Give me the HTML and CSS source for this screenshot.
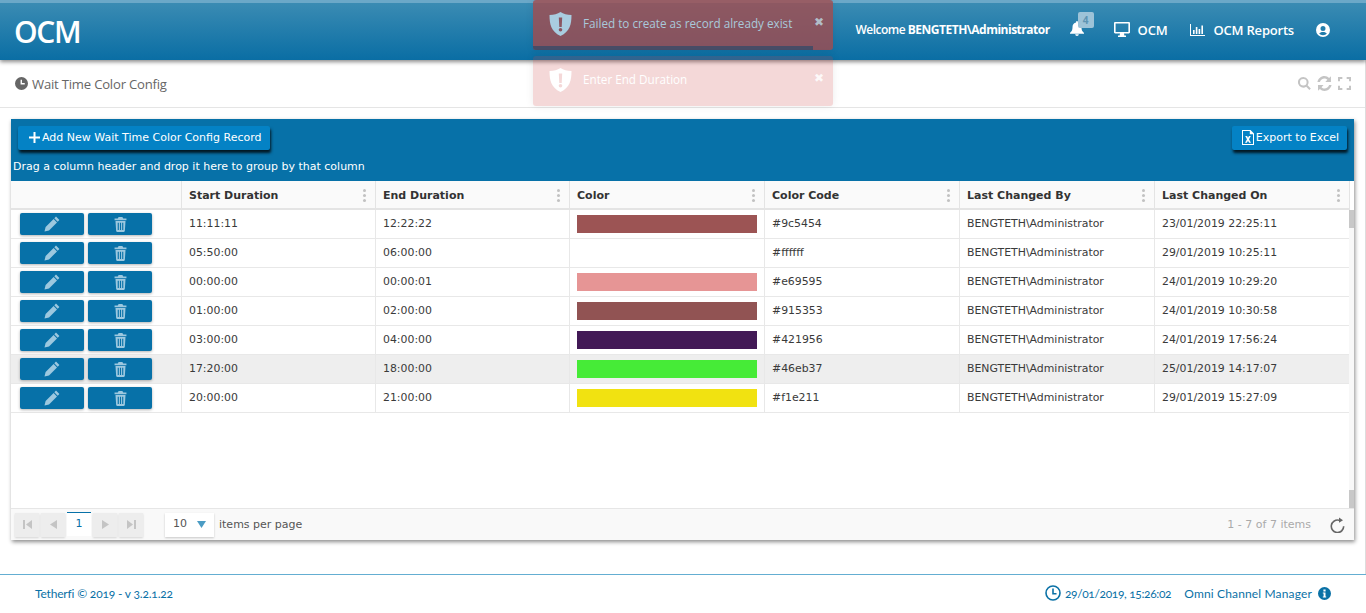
FILE: index.html
```html
<!DOCTYPE html>
<html lang="en">
<head>
    <meta charset="UTF-8">
    <title>Wait Time Color Config</title>
    <link rel="stylesheet" href="styles.css">
</head>
<body>
    <svg class="defs" width="0" height="0">
        <symbol id="i-pencil" viewBox="0 0 16 16"><path d="M12 .6l3.400 3.400-1.700 1.700-3.400-3.400zM9.600 3l3.400 3.400-8 8-4.500 1.100 1.100-4.500z"/></symbol>
        <symbol id="i-trash" viewBox="0 0 14 16"><path d="M5 0h4l1 1.600h3.400v1.800H.6V1.600H4zM1.600 4.200h10.800l-.7 10.600c0 .7-.5 1.200-1.200 1.200H3.500c-.7 0-1.200-.5-1.200-1.200zM4 6v8h1.200V6zm2.400 0v8h1.200V6zM8.800 6v8H10V6z" fill-rule="evenodd"/></symbol>
    </svg>

    <header class="topbar">
        <div class="logo">OCM</div>
        <nav class="topnav">
            <span class="welcome">Welcome <b>BENGTETH\Administrator</b></span>
            <span class="bell">
                <svg width="14" height="15" viewBox="0 0 15 16"><path d="M7.500 0c.6 0 1 .4 1 1v.6c2.300.4 3.800 2.300 3.800 4.600 0 4 1 5 2.700 6.600v.7H0v-.7c1.700-1.600 2.700-2.600 2.700-6.600 0-2.300 1.500-4.200 3.800-4.600V1c0-.6.4-1 1-1zM5.600 14.200h3.800c0 1-.8 1.800-1.900 1.800s-1.900-.8-1.900-1.800z"/></svg>
                <span class="bell-count">4</span>
            </span>
            <span class="navlink">
                <svg width="16" height="15" viewBox="0 0 16 15"><path d="M1.200 0h13.600c.7 0 1.200.5 1.200 1.200v9.100c0 .7-.5 1.200-1.200 1.200H10l.4 1.900h1.600V15H4v-1.600h1.600l.4-1.900H1.200C.5 11.500 0 11 0 10.300V1.200C0 .5.500 0 1.200 0zm.4 1.600v8.300h12.800V1.600z" fill-rule="evenodd"/></svg>
                OCM
            </span>
            <span class="navlink">
                <svg width="15" height="12" viewBox="0 0 15 12"><path d="M0 0h1v11h14v1H0zM3 6h1.600v4H3zM5.800 3h1.600v7H5.800zM8.600 5h1.600v5H8.600zM11.400 1.500H13V10h-1.600z"/></svg>
                OCM Reports
            </span>
            <svg class="user" width="14" height="14" viewBox="0 0 14 14"><path d="M7 0a7 7 0 1 1 0 14A7 7 0 0 1 7 0zm0 3a2.500 2.500 0 1 0 0 5 2.500 2.500 0 0 0 0-5zm0 6c-1.800 0-3.200.6-3.800 1.500C4.100 11.500 5.500 12.200 7 12.200s2.900-.7 3.800-1.700C10.200 9.600 8.800 9 7 9z" fill-rule="evenodd"/></svg>
        </nav>
    </header>

    <!-- Toasts sit over the header -->
    <div class="toast toast-dark">
        <svg class="shield" width="23" height="24" viewBox="0 0 23 24"><path d="M11.500 0c3 2 6.500 3 11 3 0 9-1.500 16.500-11 21C2 19.500.5 12 .5 3c4.500 0 8-1 11-3zM9.800 5.500l.5 9.500h2.400l.5-9.500zM11.500 16a1.800 1.800 0 1 0 0 3.600 1.800 1.800 0 0 0 0-3.600z" fill-rule="evenodd"/></svg>
        <span class="toast-text">Failed to create as record already exist</span>
        <span class="toast-close">&#10006;</span>
        <div class="toast-progress"></div>
    </div>
    <div class="toast toast-light">
        <svg class="shield" width="23" height="24" viewBox="0 0 23 24"><path d="M11.500 0c3 2 6.500 3 11 3 0 9-1.500 16.500-11 21C2 19.500.5 12 .5 3c4.500 0 8-1 11-3zM9.800 5.500l.5 9.500h2.400l.5-9.500zM11.500 16a1.800 1.800 0 1 0 0 3.600 1.800 1.800 0 0 0 0-3.600z" fill-rule="evenodd"/></svg>
        <span class="toast-text">Enter End Duration</span>
        <span class="toast-close">&#10006;</span>
    </div>

    <main class="content">
        <div class="titlebar">
            <h1>
                <svg width="13" height="13" viewBox="0 0 14 14"><path d="M7 0a7 7 0 1 1 0 14A7 7 0 0 1 7 0zM6 3v5h4.500V6.500H7.500V3z" fill-rule="evenodd"/></svg>
                Wait Time Color Config
            </h1>
            <div class="tools">
                <svg width="13" height="13" viewBox="0 0 13 13"><path d="M5.300 0a5.300 5.300 0 0 1 4.300 8.300l3.200 3.200-1.400 1.400-3.200-3.200A5.300 5.300 0 1 1 5.300 0zm0 2a3.300 3.300 0 1 0 0 6.600 3.300 3.300 0 0 0 0-6.600z" fill-rule="evenodd"/></svg>
                <svg width="15" height="15" viewBox="0 0 14 14"><path d="M7 0c1.700 0 3.200.7 4.300 1.800L13 .2V5.500H7.800l1.900-1.900C9 2.900 8 2.300 7 2.300 5 2.300 3.400 3.500 2.700 5.500H.4C1.100 2.300 3.700 0 7 0zM.9 8.500h5.200l-1.900 1.900c.7.700 1.700 1.300 2.800 1.300 2 0 3.600-1.200 4.300-3.200h2.300C12.900 11.700 10.300 14 7 14c-1.700 0-3.200-.7-4.300-1.800L1 13.800z"/></svg>
                <svg width="13" height="13" viewBox="0 0 12 12"><path d="M0 0h4v1.800H1.800V4H0zM8 0h4v4h-1.800V1.800H8zM0 8h1.800v2.200H4V12H0zM10.200 8H12v4H8v-1.800h2.200z"/></svg>
            </div>
        </div>

        <section class="grid">
            <div class="grid-toolbar">
                <div class="toolbar-row">
                    <button class="btn-primary">
                        <svg width="11" height="11" viewBox="0 0 11 11"><path d="M4.500 0h2v4.500H11v2H6.500V11h-2V6.500H0v-2h4.500z"/></svg>
                        Add New Wait Time Color Config Record
                    </button>
                    <button class="btn-primary btn-export">
                        <svg width="14" height="15" viewBox="0 0 14 15"><path d="M1 0h8.500L13 3.500V15H1zm1 1v13h10V4.200H8.800V1zm2.200 5h1.900l.9 1.800L8 6h1.800L8 9.300l2 3.400H8.100L7 10.700l-1.100 2H4l2-3.400z" fill-rule="evenodd"/></svg>
                        Export to Excel
                    </button>
                </div>
                <div class="group-hint">Drag a column header and drop it here to group by that column</div>
            </div>

            <div class="grid-body">
                <table class="data">
                    <colgroup>
                        <col class="col-actions"><col class="col-time"><col class="col-time">
                        <col class="col-wide"><col class="col-wide"><col class="col-wide"><col>
                    </colgroup>
                    <thead>
                        <tr>
                            <th></th>
                            <th>Start Duration<span class="kebab"></span></th>
                            <th>End Duration<span class="kebab"></span></th>
                            <th>Color<span class="kebab"></span></th>
                            <th>Color Code<span class="kebab"></span></th>
                            <th>Last Changed By<span class="kebab"></span></th>
                            <th>Last Changed On<span class="kebab"></span></th>
                        </tr>
                    </thead>
                    <tbody>
                        <tr>
                            <td class="actions"><button class="btn-row"><svg width="16" height="16"><use href="#i-pencil"/></svg></button><button class="btn-row"><svg width="13" height="15"><use href="#i-trash"/></svg></button></td>
                            <td>11:11:11</td><td>12:22:22</td><td class="color-cell"><div class="swatch c1"></div></td><td>#9c5454</td><td>BENGTETH\Administrator</td><td>23/01/2019 22:25:11</td>
                        </tr>
                        <tr>
                            <td class="actions"><button class="btn-row"><svg width="16" height="16"><use href="#i-pencil"/></svg></button><button class="btn-row"><svg width="13" height="15"><use href="#i-trash"/></svg></button></td>
                            <td>05:50:00</td><td>06:00:00</td><td class="color-cell"><div class="swatch c2"></div></td><td>#ffffff</td><td>BENGTETH\Administrator</td><td>29/01/2019 10:25:11</td>
                        </tr>
                        <tr>
                            <td class="actions"><button class="btn-row"><svg width="16" height="16"><use href="#i-pencil"/></svg></button><button class="btn-row"><svg width="13" height="15"><use href="#i-trash"/></svg></button></td>
                            <td>00:00:00</td><td>00:00:01</td><td class="color-cell"><div class="swatch c3"></div></td><td>#e69595</td><td>BENGTETH\Administrator</td><td>24/01/2019 10:29:20</td>
                        </tr>
                        <tr>
                            <td class="actions"><button class="btn-row"><svg width="16" height="16"><use href="#i-pencil"/></svg></button><button class="btn-row"><svg width="13" height="15"><use href="#i-trash"/></svg></button></td>
                            <td>01:00:00</td><td>02:00:00</td><td class="color-cell"><div class="swatch c4"></div></td><td>#915353</td><td>BENGTETH\Administrator</td><td>24/01/2019 10:30:58</td>
                        </tr>
                        <tr>
                            <td class="actions"><button class="btn-row"><svg width="16" height="16"><use href="#i-pencil"/></svg></button><button class="btn-row"><svg width="13" height="15"><use href="#i-trash"/></svg></button></td>
                            <td>03:00:00</td><td>04:00:00</td><td class="color-cell"><div class="swatch c5"></div></td><td>#421956</td><td>BENGTETH\Administrator</td><td>24/01/2019 17:56:24</td>
                        </tr>
                        <tr class="hover">
                            <td class="actions"><button class="btn-row"><svg width="16" height="16"><use href="#i-pencil"/></svg></button><button class="btn-row"><svg width="13" height="15"><use href="#i-trash"/></svg></button></td>
                            <td>17:20:00</td><td>18:00:00</td><td class="color-cell"><div class="swatch c6"></div></td><td>#46eb37</td><td>BENGTETH\Administrator</td><td>25/01/2019 14:17:07</td>
                        </tr>
                        <tr>
                            <td class="actions"><button class="btn-row"><svg width="16" height="16"><use href="#i-pencil"/></svg></button><button class="btn-row"><svg width="13" height="15"><use href="#i-trash"/></svg></button></td>
                            <td>20:00:00</td><td>21:00:00</td><td class="color-cell"><div class="swatch c7"></div></td><td>#f1e211</td><td>BENGTETH\Administrator</td><td>29/01/2019 15:27:09</td>
                        </tr>
                    </tbody>
                </table>
                <div class="scrollbar"><div class="thumb"></div><div class="thumb"></div></div>
            </div>

            <div class="pager">
                <div class="pager-left">
                    <span class="page-btn"><svg width="9" height="9" viewBox="0 0 9 9"><path d="M0 0h2v9H0zM9 0v9L3 4.500z"/></svg></span>
                    <span class="page-btn"><svg width="7" height="9" viewBox="0 0 7 9"><path d="M7 0v9L0 4.500z"/></svg></span>
                    <span class="page-current">1</span>
                    <span class="page-btn"><svg width="7" height="9" viewBox="0 0 7 9"><path d="M0 0v9l7-4.500z"/></svg></span>
                    <span class="page-btn"><svg width="9" height="9" viewBox="0 0 9 9"><path d="M9 0H7v9h2zM0 0v9l6-4.500z"/></svg></span>
                    <span class="page-size">10<svg width="9" height="7" viewBox="0 0 9 7"><path d="M0 0h9L4.500 7z"/></svg></span>
                    <span class="per-page">items per page</span>
                </div>
                <div class="pager-right">
                    <span class="page-info">1 - 7 of 7 items</span>
                    <svg class="reload" width="15" height="16" viewBox="0 0 15 16"><path d="M9 .5l4 2.700-4 2.600V4.100A5.400 5.400 0 1 0 12.900 9.300h1.600A7 7 0 1 1 9 2.500z"/></svg>
                </div>
            </div>
        </section>
    </main>

    <footer class="pagefoot">
        <span class="copy">Tetherfi © 2019 - v 3.2.1.22</span>
        <div class="foot-right">
            <svg width="16" height="16" viewBox="0 0 16 16" fill="none" stroke="#0a71a6" stroke-width="1.600"><circle cx="8" cy="8" r="7"/><path d="M8 3.500V8.700H11.500"/></svg>
            <span class="stamp">29/01/2019, 15:26:02</span>
            <span class="product">Omni Channel Manager</span>
            <svg width="13" height="13" viewBox="0 0 13 13"><path fill="#0a71a6" d="M6.500 0a6.500 6.500 0 1 1 0 13 6.500 6.500 0 0 1 0-13zM5.400 2.400v2h2.200v-2zM4.800 5.400v1.200h.8v2.800h-.8v1.200h3.400V9.400h-.7V5.400z" fill-rule="evenodd"/></svg>
        </div>
    </footer>
</body>
</html>
```

FILE: styles.css
```css
/* Base */
html, body {
    margin: 0;
    padding: 0;
    height: 100%;
    overflow: hidden;
}
body {
    position: relative;
    font-family: "DejaVu Sans", sans-serif;
    font-size: 11px;
    color: #333;
    background: #fff;
}
.defs {
    position: absolute;
}

/* Top bar */
.topbar {
    height: 60px;
    box-sizing: border-box;
    border-top: 3px solid #6ba8c8;
    background: linear-gradient(#3a8bb3, #0a6ea4);
    box-shadow: 0 2px 4px rgba(0, 0, 0, 0.45);
    display: flex;
    justify-content: space-between;
    align-items: center;
    padding: 0 36px 0 14px;
    color: #fff;
    font-family: "Open Sans", sans-serif;
    position: relative;
}
.logo {
    font-size: 30px;
    font-weight: 600;
    letter-spacing: -1.300px;
    margin-top: -1px;
}
.topnav {
    display: flex;
    align-items: center;
    font-size: 13px;
    font-weight: 600;
    letter-spacing: -0.200px;
    margin-top: -4px;
}
.topnav svg {
    fill: #fff;
}
.welcome {
    font-size: 12px;
    margin-right: 20px;
    letter-spacing: -0.500px;
}
.welcome b {
    font-weight: 700;
}
.bell {
    position: relative;
    display: flex;
    width: 15px;
    margin-right: 29px;
    top: -1px;
}
.bell-count {
    position: absolute;
    left: 8px;
    top: -9px;
    width: 16px;
    height: 16px;
    border-radius: 2px;
    background: #9dc3d8;
    color: #5d94b3;
    font-size: 10px;
    font-weight: 700;
    line-height: 16px;
    text-align: center;
}
.navlink {
    display: flex;
    align-items: center;
    gap: 8px;
    margin-right: 22px;
}
.navlink + .navlink {
    margin-left: 1px;
}

/* Toasts */
.toast {
    position: absolute;
    left: 533px;
    width: 300px;
    height: 50px;
    border-radius: 3px;
    box-shadow: 0 0 8px rgba(0, 0, 0, 0.08);
    font-family: "Open Sans", sans-serif;
    font-size: 11.700px;
}
.toast-dark {
    top: 0;
    background: rgba(162, 75, 77, 0.8);
    color: #a9c9da;
}
.toast-light {
    top: 56px;
    background: rgba(200, 60, 60, 0.2);
    color: #fff;
}
.shield {
    position: absolute;
    left: 16px;
    top: 12px;
}
.toast-dark .shield {
    fill: #a9cde0;
}
.toast-light .shield {
    fill: #fff;
}
.toast-text {
    position: absolute;
    left: 50px;
    top: 15px;
}
.toast-close {
    position: absolute;
    right: 9px;
    top: 15px;
    font-size: 12px;
    font-family: "DejaVu Sans", sans-serif;
    opacity: 0.85;
}
.toast-dark .toast-close {
    color: #b9d0db;
}
.toast-progress {
    position: absolute;
    left: 0;
    bottom: 0;
    width: 280px;
    height: 4px;
    background: #474c66;
    border-radius: 0 0 0 3px;
}

/* Content */
.content {
    height: 514px;
    box-sizing: border-box;
    border-right: 1px solid #ddd;
}
.titlebar {
    height: 48px;
    box-sizing: border-box;
    border-bottom: 1px solid #e5e5e5;
    display: flex;
    justify-content: space-between;
    align-items: center;
    padding: 0 14px 0 15px;
}
.titlebar h1 {
    margin: 0;
    display: flex;
    align-items: center;
    gap: 4px;
    font-family: "Open Sans", sans-serif;
    font-size: 13.100px;
    font-weight: 400;
    color: #666;
    letter-spacing: -0.200px;
}
.titlebar h1 svg {
    fill: #666;
}
.tools {
    display: flex;
    align-items: center;
    gap: 6px;
}
.tools svg {
    fill: #c4c4c4;
}

/* Grid */
.grid {
    margin: 11px 11px 0 11px;
    height: 421px;
    box-shadow: 1px 2px 4px rgba(0, 0, 0, 0.45);
    display: flex;
    flex-direction: column;
}
.grid-toolbar {
    height: 62px;
    box-sizing: border-box;
    background: #0771a8;
    padding: 7px 7px 0 7px;
    color: #fff;
}
.toolbar-row {
    display: flex;
    justify-content: space-between;
}
.btn-primary {
    height: 24px;
    box-sizing: border-box;
    border: 0;
    border-radius: 2px;
    background: #0482c5;
    color: #fff;
    font-family: "DejaVu Sans", sans-serif;
    font-size: 11px;
    padding: 0 8px 2px 11px;
    display: flex;
    align-items: center;
    gap: 2px;
    box-shadow: 1px 3px 3px rgba(0, 0, 0, 0.8);
}
.btn-primary svg {
    fill: #fff;
}
.btn-export {
    padding-left: 9px;
    gap: 1px;
}
.group-hint {
    margin: 10px 0 0 -5px;
    font-size: 11px;
    line-height: 14px;
}
.grid-body {
    flex: 1;
    position: relative;
    background: #fff;
    overflow: hidden;
}
.data {
    width: 1339px;
    table-layout: fixed;
    border-collapse: separate;
    border-spacing: 0;
}
.col-actions {
    width: 171px;
}
.col-time {
    width: 194px;
}
.col-wide {
    width: 195px;
}
.data th {
    position: relative;
    height: 29px;
    padding: 2px 0 0 7px;
    box-sizing: border-box;
    background: #fafafa;
    border-right: 1px solid #e4e4e4;
    border-bottom: 2px solid #e4e4e4;
    text-align: left;
    font-weight: 700;
    font-size: 11px;
    color: #333;
}
.kebab {
    position: absolute;
    right: 9px;
    top: 8px;
    width: 3px;
    height: 3px;
    border-radius: 50%;
    background: #c2c2c2;
    box-shadow: 0 5px 0 #c2c2c2, 0 10px 0 #c2c2c2;
}
.data td {
    height: 29px;
    padding: 0 7px 2px;
    box-sizing: border-box;
    border-right: 1px solid #e8e8e8;
    border-bottom: 1px solid #e8e8e8;
    font-size: 10.900px;
    color: #3a3a3a;
    white-space: nowrap;
}
.data tr.hover td {
    background: #eee;
}
.data td.actions {
    padding: 0 0 0 9px;
}
.data td.color-cell {
    padding: 0 7px;
}
.btn-row {
    width: 64px;
    height: 22px;
    padding: 0;
    margin-right: 4px;
    border: 0;
    border-radius: 2px;
    background: #0771a8;
    box-shadow: 0 1px 3px rgba(0, 0, 0, 0.3);
    vertical-align: middle;
    display: inline-flex;
    align-items: center;
    justify-content: center;
}
.btn-row svg {
    fill: #9cc8df;
}
.swatch {
    height: 18px;
    width: 180px;
}
.c1 { background: #9c5454; }
.c2 { background: #ffffff; }
.c3 { background: #e69595; }
.c4 { background: #915353; }
.c5 { background: #421956; }
.c6 { background: #46eb37; }
.c7 { background: #f1e211; }
.scrollbar {
    position: absolute;
    right: 0;
    top: 29px;
    bottom: 0;
    width: 5px;
    background: #f8f8f8;
    display: flex;
    flex-direction: column;
    justify-content: space-between;
}
.thumb {
    height: 18px;
    background: #c8c8c8;
}

/* Pager */
.pager {
    height: 32px;
    box-sizing: border-box;
    background: #f9f9f9;
    border-top: 1px solid #e6e6e6;
    display: flex;
    justify-content: space-between;
    align-items: center;
    padding: 0 9px 0 4px;
}
.pager-left, .pager-right {
    display: flex;
    align-items: center;
}
.page-btn {
    width: 24px;
    height: 24px;
    margin-right: 2px;
    background: #ededed;
    box-shadow: 0 1px 2px rgba(0, 0, 0, 0.15);
    display: flex;
    align-items: center;
    justify-content: center;
}
.page-btn svg {
    fill: #c4c4c4;
}
.page-current {
    width: 24px;
    height: 24px;
    box-sizing: border-box;
    margin: -1px 2px 0 0;
    border-top: 1px solid #0771a8;
    background: #fff;
    color: #0771a8;
    text-align: center;
    line-height: 22px;
}
.page-size {
    width: 49px;
    height: 24px;
    box-sizing: border-box;
    margin-left: 20px;
    padding: 0 8px 2px;
    background: #fff;
    box-shadow: 0 1px 2px rgba(0, 0, 0, 0.2);
    display: flex;
    align-items: center;
    justify-content: space-between;
    color: #555;
}
.page-size svg {
    fill: #4b9cc4;
    margin-top: 1px;
}
.per-page {
    margin-left: 5px;
    color: #555;
}
.page-info {
    color: #aaa;
    margin-right: 19px;
}
.reload {
    fill: #666;
}

/* Footer */
.pagefoot {
    height: 39px;
    box-sizing: border-box;
    border-top: 1px solid #64aed2;
    display: flex;
    justify-content: space-between;
    align-items: center;
    padding: 0 35px 2px 35px;
    font-family: Lato, sans-serif;
    font-size: 12px;
    font-variant-numeric: oldstyle-nums;
    color: #0a71a6;
}
.copy {
    letter-spacing: -0.180px;
}
.foot-right {
    display: flex;
    align-items: center;
}
.stamp {
    margin: 0 13px 0 4px;
    letter-spacing: -0.350px;
}
.product {
    margin-right: 6px;
    letter-spacing: 0.150px;
}
```
